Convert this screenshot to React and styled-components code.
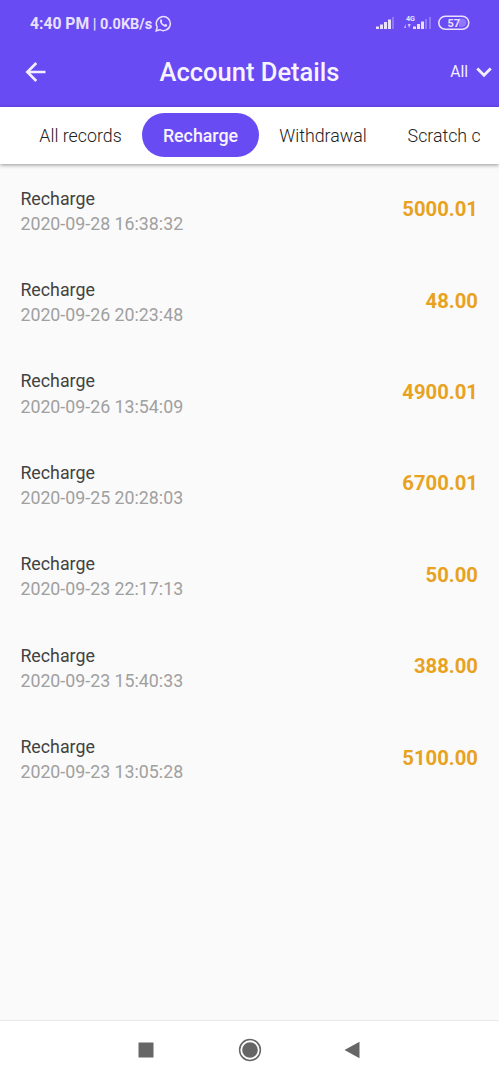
import styled, { createGlobalStyle } from "styled-components";

const GlobalStyle = createGlobalStyle`
  * {
    box-sizing: border-box;
  }
  body {
    margin: 0;
    background: #fafafa;
    font-family: Roboto, "Liberation Sans", sans-serif;
  }
`;

const Screen = styled.div`
  display: flex;
  flex-direction: column;
  width: 499px;
  height: 1080px;
  overflow: hidden;
  background: #fafafa;
`;

const Header = styled.header`
  height: 107px;
  flex: none;
  background: #694bf4;
  color: #f3eeff;
`;

const StatusBar = styled.div`
  display: flex;
  align-items: center;
  justify-content: space-between;
  height: 46px;
  padding: 0 29px 0 30px;
`;

const StatusText = styled.div`
  display: flex;
  align-items: center;
  gap: 3px;
  height: 20px;
  font-size: 15.7px;
  font-weight: 700;
  color: #e9e0ff;
  white-space: pre;
`;

const Speed = styled.span`
  font-size: 14.5px;
`;

const StatusIcons = styled.div`
  display: flex;
  align-items: center;
`;

const TitleBar = styled.div`
  display: grid;
  grid-template-columns: 100px 1fr 100px;
  align-items: center;
  height: 52px;
`;

const BackButton = styled.div`
  display: flex;
  padding-left: 24px;
`;

const Title = styled.h1`
  margin: 0;
  font-size: 25.5px;
  font-weight: 500;
  line-height: 30px;
  text-align: center;
  color: #f7f3ff;
  white-space: nowrap;
`;

const Filter = styled.div`
  display: flex;
  align-items: center;
  justify-content: flex-end;
  gap: 8px;
  padding-right: 7px;
  font-size: 15.6px;
  line-height: 20px;
`;

const TabBar = styled.nav`
  position: relative;
  flex: none;
  height: 57px;
  padding: 6px 19px 0;
  background: #fff;
  box-shadow: 0 1px 4px rgba(0, 0, 0, 0.42);
`;

const Tabs = styled.div`
  display: flex;
  overflow: hidden;
`;

const Tab = styled.div`
  flex: none;
  width: ${(props) => props.$width}px;
  height: 44px;
  border-radius: 22px;
  font-size: 17.8px;
  line-height: 45px;
  text-align: center;
  white-space: nowrap;
  font-weight: ${(props) => (props.$active ? 500 : 300)};
  color: ${(props) => (props.$active ? "#f7f3ff" : "#222")};
  background: ${(props) => (props.$active ? "#694bf4" : "transparent")};
`;

const List = styled.main`
  flex: 1;
  padding-top: 1.1px;
`;

const Row = styled.div`
  display: flex;
  align-items: center;
  justify-content: space-between;
  height: 91.4px;
  padding: 0 21px 0 20.4px;
`;

const Name = styled.div`
  font-size: 17.8px;
  line-height: 25.2px;
  color: #424242;
`;

const Time = styled.div`
  font-size: 17.8px;
  line-height: 25.2px;
  color: #a0a0a0;
`;

const Amount = styled.div`
  padding-bottom: 3px;
  font-size: 20.3px;
  font-weight: 700;
  line-height: 24px;
  color: #e8a21f;
`;

const NavBar = styled.footer`
  display: grid;
  grid-template-columns: 104px 103px 101px;
  justify-content: center;
  justify-items: center;
  align-items: center;
  flex: none;
  height: 60px;
  padding: 0 3px 2px 0;
  border-top: 1px solid #e9e9e9;
  background: #fff;
`;

const records = [
  { time: "2020-09-28 16:38:32", amount: "5000.01" },
  { time: "2020-09-26 20:23:48", amount: "48.00" },
  { time: "2020-09-26 13:54:09", amount: "4900.01" },
  { time: "2020-09-25 20:28:03", amount: "6700.01" },
  { time: "2020-09-23 22:17:13", amount: "50.00" },
  { time: "2020-09-23 15:40:33", amount: "388.00" },
  { time: "2020-09-23 13:05:28", amount: "5100.00" },
];

// the last tab runs past the edge of the strip
const tabs = [
  { label: "All records", width: 123 },
  { label: "Recharge", width: 117, active: true },
  { label: "Withdrawal", width: 128 },
  { label: "Scratch card", width: 139.5 },
];

const ChatIcon = () => (
  <svg width="17" height="17" viewBox="0 0 17 17" fill="none" stroke="#e9e0ff">
    <path d="M1.2 15.8l1-3.8a7 7 0 1 1 2.7 2.7z" strokeWidth="1.5" />
    <path
      d="M5.4 4.7c.5-.6 1.1-.5 1.3 0l.6 1.4c.1.4-.6.8-.5 1.1.5 1.1 1.5 2 2.7 2.5.4.1.8-.9 1.2-.7l1.3.7c.5.3.2 1-.2 1.5-1 1-3 .4-4.6-1C5.6 8.8 4.3 6.2 5.4 4.7z"
      fill="#e9e0ff"
      stroke="none"
    />
  </svg>
);

const SignalIcons = () => (
  <svg width="94" height="20" viewBox="0 0 94 20" fill="#e9e0ff">
    <rect x="0" y="13.5" width="3" height="2.5" />
    <rect x="4" y="11.5" width="3" height="4.5" />
    <rect x="8" y="9" width="3" height="7" />
    <rect x="12" y="6.5" width="3" height="9.5" />
    <rect x="16" y="4" width="2" height="12" opacity="0.3" />
    <text x="30" y="7.8" fontSize="7.2" fontWeight="700">4G</text>
    <path d="M28 15l1.7-4v4zM31.7 11h3l-1.5 4z" opacity="0.8" />
    <rect x="37" y="13.5" width="3" height="2.5" />
    <rect x="41" y="11" width="3" height="5" />
    <rect x="45" y="8.5" width="3" height="7.5" />
    <rect x="49" y="6" width="2" height="10" opacity="0.3" />
    <rect x="53" y="4" width="2" height="12" opacity="0.3" />
    <rect x="62.8" y="3.3" width="30" height="13" rx="6.5" fill="none" stroke="#e9e0ff" strokeWidth="1.6" />
    <path d="M83 5.5h3a4.3 4.3 0 0 1 0 8.6h-3z" opacity="0.3" />
    <text x="77.8" y="13.8" fontSize="11" fontWeight="700" textAnchor="middle">57</text>
  </svg>
);

const App = () => {
  return (
    <>
      <GlobalStyle />
      <Screen>
        <Header>
          <StatusBar>
            <StatusText>
              <span>4:40 PM<Speed> | 0.0KB/s</Speed></span>
              <ChatIcon />
            </StatusText>
            <StatusIcons>
              <SignalIcons />
            </StatusIcons>
          </StatusBar>
          <TitleBar>
            <BackButton>
              <svg width="24" height="24" viewBox="0 0 24 24" fill="none" stroke="#f3eeff" strokeWidth="2.6">
                <path d="M21.5 12H3M12.3 3l-9 9 9 9" />
              </svg>
            </BackButton>
            <Title>Account Details</Title>
            <Filter>
              All
              <svg width="16" height="12" viewBox="0 0 16 12" fill="none" stroke="#f3eeff" strokeWidth="2.8">
                <path d="M1.3 2.5l6.7 6.7 6.7-6.7" />
              </svg>
            </Filter>
          </TitleBar>
        </Header>
        <TabBar>
          <Tabs>
            {tabs.map((tab) => (
              <Tab key={tab.label} $width={tab.width} $active={tab.active}>
                {tab.label}
              </Tab>
            ))}
          </Tabs>
        </TabBar>
        <List>
          {records.map((record) => (
            <Row key={record.time}>
              <div>
                <Name>Recharge</Name>
                <Time>{record.time}</Time>
              </div>
              <Amount>{record.amount}</Amount>
            </Row>
          ))}
        </List>
        <NavBar>
          <svg width="16" height="16" viewBox="0 0 16 16">
            <rect x="0.5" y="0.5" width="15" height="15" rx="0.5" fill="#666" />
          </svg>
          <svg width="24" height="24" viewBox="0 0 24 24">
            <circle cx="12" cy="12" r="10.4" fill="none" stroke="#666" strokeWidth="1.5" />
            <circle cx="12" cy="12" r="7.8" fill="#666" />
          </svg>
          <svg width="16" height="18" viewBox="0 0 16 18">
            <path d="M0.5 9L15.5 0.8v16.4z" fill="#666" />
          </svg>
        </NavBar>
      </Screen>
    </>
  );
};

export default App;
